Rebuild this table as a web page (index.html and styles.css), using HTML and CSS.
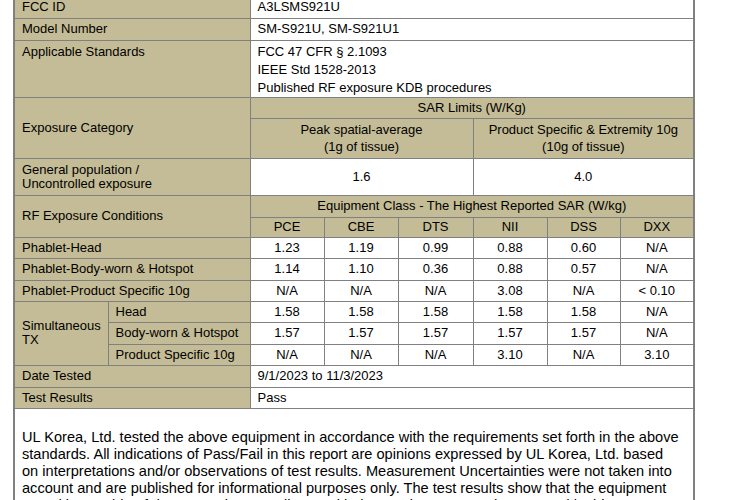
FILE: index.html
```html
<!DOCTYPE html>
<html>
<head>
<meta charset="utf-8">
<link rel="stylesheet" href="styles.css">
</head>
<body>
<div class="sheet">
  <table class="sar">
    <colgroup>
      <col class="c-l1"><col class="c-l2">
      <col class="c-d"><col class="c-d"><col class="c-d3"><col class="c-d"><col class="c-d6"><col class="c-d6">
    </colgroup>
    <tr class="h22">
      <td class="lab" colspan="2">FCC ID</td>
      <td class="val" colspan="6">A3LSMS921U</td>
    </tr>
    <tr class="h22">
      <td class="lab" colspan="2">Model Number</td>
      <td class="val" colspan="6">SM-S921U, SM-S921U1</td>
    </tr>
    <tr class="h57">
      <td class="lab top" colspan="2">Applicable Standards</td>
      <td class="val std" colspan="6">FCC 47 CFR § 2.1093<br>IEEE Std 1528-2013<br>Published RF exposure KDB procedures</td>
    </tr>
    <tr class="h21">
      <td class="lab" colspan="2" rowspan="2">Exposure Category</td>
      <td class="hd" colspan="6">SAR Limits (W/Kg)</td>
    </tr>
    <tr class="h40">
      <td class="hd two" colspan="3">Peak spatial-average<br>(1g of tissue)</td>
      <td class="hd two" colspan="3">Product Specific &amp; Extremity 10g<br>(10g of tissue)</td>
    </tr>
    <tr class="h37">
      <td class="lab tight" colspan="2">General population /<br>Uncontrolled exposure</td>
      <td class="num" colspan="3">1.6</td>
      <td class="num" colspan="3">4.0</td>
    </tr>
    <tr class="h22">
      <td class="lab" colspan="2" rowspan="2">RF Exposure Conditions</td>
      <td class="hd" colspan="6">Equipment Class - The Highest Reported SAR (W/kg)</td>
    </tr>
    <tr class="h20">
      <td class="hd">PCE</td><td class="hd">CBE</td><td class="hd">DTS</td><td class="hd">NII</td><td class="hd">DSS</td><td class="hd">DXX</td>
    </tr>
    <tr class="h21">
      <td class="lab" colspan="2">Phablet-Head</td>
      <td class="num">1.23</td><td class="num">1.19</td><td class="num">0.99</td><td class="num">0.88</td><td class="num">0.60</td><td class="num">N/A</td>
    </tr>
    <tr class="h22">
      <td class="lab" colspan="2">Phablet-Body-worn &amp; Hotspot</td>
      <td class="num">1.14</td><td class="num">1.10</td><td class="num">0.36</td><td class="num">0.88</td><td class="num">0.57</td><td class="num">N/A</td>
    </tr>
    <tr class="h21">
      <td class="lab" colspan="2">Phablet-Product Specific 10g</td>
      <td class="num">N/A</td><td class="num">N/A</td><td class="num">N/A</td><td class="num">3.08</td><td class="num">N/A</td><td class="num">&lt; 0.10</td>
    </tr>
    <tr class="h21">
      <td class="lab tight2" rowspan="3">Simultaneous<br>TX</td>
      <td class="lab">Head</td>
      <td class="num">1.58</td><td class="num">1.58</td><td class="num">1.58</td><td class="num">1.58</td><td class="num">1.58</td><td class="num">N/A</td>
    </tr>
    <tr class="h22">
      <td class="lab">Body-worn &amp; Hotspot</td>
      <td class="num">1.57</td><td class="num">1.57</td><td class="num">1.57</td><td class="num">1.57</td><td class="num">1.57</td><td class="num">N/A</td>
    </tr>
    <tr class="h21">
      <td class="lab">Product Specific 10g</td>
      <td class="num">N/A</td><td class="num">N/A</td><td class="num">N/A</td><td class="num">3.10</td><td class="num">N/A</td><td class="num">3.10</td>
    </tr>
    <tr class="h22">
      <td class="lab" colspan="2">Date Tested</td>
      <td class="val" colspan="6">9/1/2023 to 11/3/2023</td>
    </tr>
    <tr class="h21">
      <td class="lab" colspan="2">Test Results</td>
      <td class="val" colspan="6">Pass</td>
    </tr>
  </table>
  <p class="note">UL Korea, Ltd. tested the above equipment in accordance with the requirements set forth in the above standards. All indications of Pass/Fail in this report are opinions expressed by UL Korea, Ltd. based on interpretations and/or observations of test results. Measurement Uncertainties were not taken into account and are published for informational purposes only. The test results show that the equipment tested is capable of demonstrating compliance with the requirements as documented in this report.</p>
</div>
</body>
</html>
```

FILE: styles.css
```css
html, body {
  margin: 0;
  padding: 0;
  background: #ffffff;
}

body {
  font-family: "Liberation Sans", Arial, sans-serif;
  color: #000000;
  font-size: 13px;
}

.sheet {
  margin: -4px 0 0 13px;
  width: 678px;
  border-left: 2px solid #808080;
  border-right: 2px solid #808080;
  padding-bottom: 40px;
}

.sar {
  width: 678px;
  table-layout: fixed;
  border-collapse: collapse;
  border-left: hidden;
  border-right: hidden;
  border-top: hidden;
  border-bottom: 1px solid #808080;
}

.c-l1 { width: 93px; }
.c-l2 { width: 142px; }
.c-d { width: 74px; }
.c-d3 { width: 75px; }
.c-d6 { width: 73px; }

.sar td {
  border: 1px solid #808080;
  padding: 0 0 0 7px;
  line-height: 16px;
  vertical-align: middle;
  white-space: nowrap;
  overflow: hidden;
}

.h20 { height: 20px; }
.h21 { height: 21px; }
.h22 { height: 22px; }
.h37 { height: 37px; }
.h40 { height: 40px; }
.h57 { height: 57px; }

.lab {
  background: #c4bc96;
}

.lab.top {
  vertical-align: top;
  padding-top: 2px;
  line-height: 18px;
}

.lab.tight {
  line-height: 14px;
  padding-top: 1px;
}

.lab.tight2 {
  line-height: 14px;
}

.val {
  background: #ffffff;
  text-align: left;
}

.val.std {
  line-height: 18px;
  vertical-align: top;
  padding-top: 2px;
}

.sar td.hd {
  background: #c4bc96;
  text-align: center;
  padding: 0;
}

.sar td.hd.two {
  line-height: 17px;
}

.sar td.num {
  background: #ffffff;
  text-align: center;
  padding: 0;
}

.note {
  margin: 20px 0 0 0;
  padding: 0 11px 0 7px;
  font-size: 14.6px;
  line-height: 17px;
}
```
